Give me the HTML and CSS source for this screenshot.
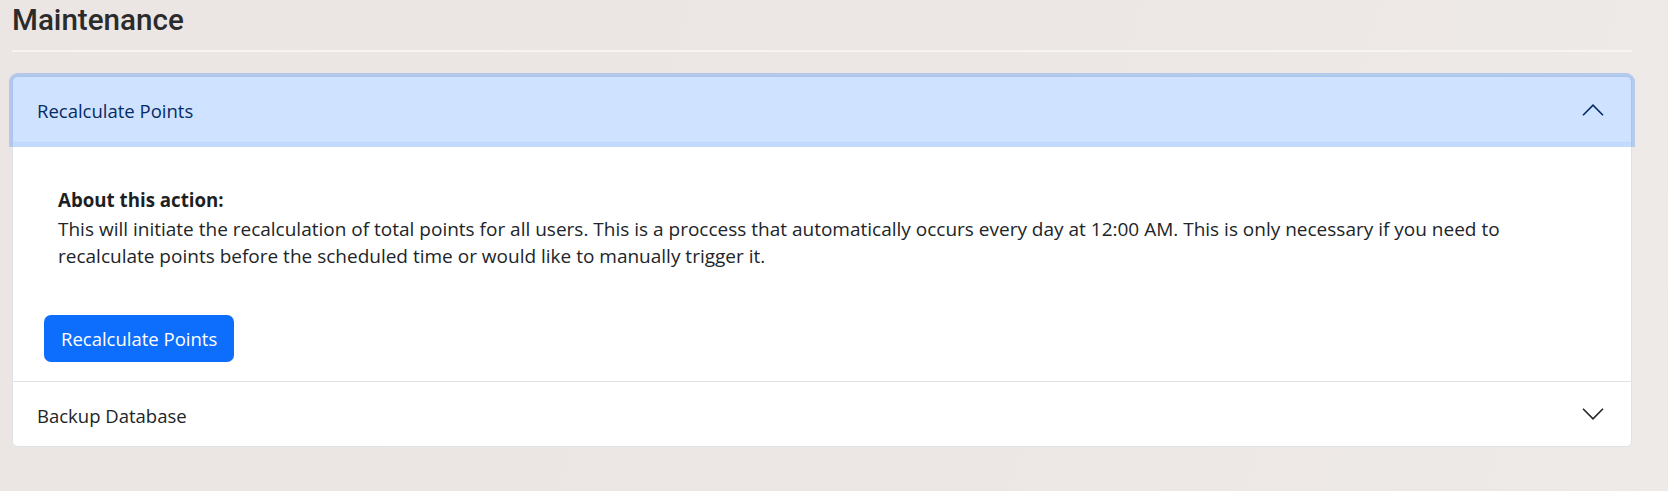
FILE: index.html
```html
<!DOCTYPE html>
<html lang="en">
<head>
<meta charset="utf-8">
<title>Maintenance</title>
<link rel="stylesheet" href="styles.css">
</head>
<body>
<main class="page">
  <h1 class="page-title">Maintenance</h1>
  <hr class="rule">
  <div class="accordion">
    <div class="acc-item">
      <h2 class="acc-header">
        <button class="acc-button is-open" type="button">
          <span>Recalculate Points</span>
          <svg class="chev chev-open" width="22" height="12" viewBox="0 0 22 12" aria-hidden="true"><polyline points="1,11.2 11,1.2 21,11.2"/></svg>
        </button>
      </h2>
      <div class="acc-body">
        <div class="about">
          <div class="about-title">About this action:</div>
          <p class="about-text">This will initiate the recalculation of total points for all users. This is a proccess that automatically occurs every day at 12:00 AM. This is only necessary if you need to recalculate points before the scheduled time or would like to manually trigger it.</p>
        </div>
        <button class="btn-primary" type="button">Recalculate Points</button>
      </div>
    </div>
    <div class="acc-item acc-item-last">
      <h2 class="acc-header">
        <button class="acc-button" type="button">
          <span>Backup Database</span>
          <svg class="chev" width="22" height="12" viewBox="0 0 22 12" aria-hidden="true"><polyline points="1,0.8 11,10.8 21,0.8"/></svg>
        </button>
      </h2>
    </div>
  </div>
</main>
</body>
</html>
```
FILE: styles.css
```css
html, body {
  margin: 0;
  padding: 0;
}

body {
  min-height: 491px;
  background: linear-gradient(105deg, #ebe6e4 0%, #ece7e5 55%, #eeeae8 100%);
  color: #212529;
  font-family: "Open Sans", "Noto Sans", sans-serif;
}

.page {
  box-sizing: border-box;
  width: 1668px;
  padding: 2px 36px 0 12px;
}

.page-title {
  margin: 0;
  font-family: Roboto, "Liberation Sans", sans-serif;
  font-weight: 500;
  font-size: 29.6px;
  line-height: 36px;
  color: #2b2b2b;
}

.rule {
  margin: 12px 0 24px;
  border: 0;
  border-top: 2px solid rgba(255, 255, 255, 0.55);
  height: 0;
}

.accordion {
  background: #fff;
  border: 1px solid #dee2e6;
  border-radius: 6px;
}

.acc-item-last {
  border-top: 1px solid #dee2e6;
}

.acc-header {
  margin: 0;
  font-size: inherit;
  font-weight: 400;
}

.acc-button {
  box-sizing: border-box;
  width: 100%;
  display: flex;
  align-items: center;
  justify-content: space-between;
  margin: 0;
  padding: 20px 27px 16px 24px;
  border: 0;
  background: #fff;
  color: #212529;
  font-family: "Open Sans", "Noto Sans", sans-serif;
  font-size: 18.5px;
  line-height: 28px;
  text-align: left;
  border-radius: 0 0 5px 5px;
  cursor: pointer;
}

.acc-button .chev {
  margin-top: -4px;
}

.acc-button.is-open {
  position: relative;
  z-index: 3;
  padding-top: 20px;
  padding-bottom: 18px;
  background: #cfe2ff;
  color: #052c65;
  border-radius: 5px 5px 0 0;
  box-shadow: inset 0 -1px 0 #c2d6f5, 0 0 0 4px rgba(13, 110, 253, 0.25);
}

.acc-button.is-open .chev {
  margin-top: -2px;
}

.chev {
  flex: none;
  display: block;
  fill: none;
  stroke: #212529;
  stroke-width: 1.6;
}

.chev-open {
  stroke: #052c65;
}

.acc-body {
  padding: 43px 31px 19px 31px;
}

.about {
  padding: 0 14px;
}

.about-title {
  font-weight: 700;
  font-size: 18.7px;
  line-height: 27px;
  margin-bottom: 3px;
  color: #1c1f23;
}

.about-text {
  margin: 0 0 45.6px;
  font-size: 19px;
  line-height: 26.7px;
}

.btn-primary {
  display: inline-block;
  margin: 0;
  padding: 10px 17px;
  border: 0;
  border-radius: 7px;
  background: #0d6efd;
  color: #fff;
  font-family: "Open Sans", "Noto Sans", sans-serif;
  font-size: 18.5px;
  line-height: 27px;
  cursor: pointer;
}
```
